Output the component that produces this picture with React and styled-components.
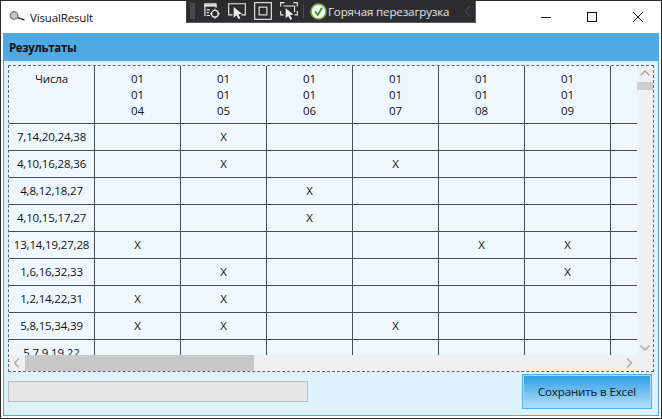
import React from "react";
import styled, { createGlobalStyle } from "styled-components";

const UI_FONT = `"Open Sans", "Noto Sans", "Liberation Sans", sans-serif`;

const GlobalStyle = createGlobalStyle`
    html, body {
        margin: 0;
        padding: 0;
        background: #ffffff;
    }
    * {
        box-sizing: border-box;
    }
`;

const Frame = styled.div`
    position: relative;
    display: flex;
    flex-direction: column;
    width: 662px;
    height: 419px;
    overflow: hidden;
    padding-bottom: 2px;
    background: #ffffff;
    border: 1px solid #2b2b2b;
    font-family: ${UI_FONT};
    font-size: 11.5px;
    color: #111111;
`;

const TitleBar = styled.div`
    display: flex;
    flex: 0 0 32px;
    align-items: center;
`;
const AppIcon = styled.svg`
    width: 16px;
    height: 12px;
    margin-left: 8px;
`;
const AppTitle = styled.span`
    flex: 1;
    margin-left: 5px;
    font-size: 11.5px;
    letter-spacing: -0.15px;
`;
const WindowButton = styled.div`
    display: flex;
    align-items: center;
    justify-content: center;
    width: 46px;
    height: 32px;
    svg {
        width: 10px;
        height: 10px;
    }
`;

const DebugToolbar = styled.div`
    position: absolute;
    top: -1px;
    left: 185px;
    display: flex;
    align-items: center;
    width: 290px;
    height: 23px;
    background: #2d2d30;
    border-right: 1px solid #5a5a5e;
    border-bottom: 1px solid #5a5a5e;
    border-left: 1px solid #3e3e42;
    color: #e6e6e6;
`;
const Gripper = styled.div`
    width: 5px;
    height: 16px;
    margin: 0 6px 0 3px;
    background-image: radial-gradient(#6a6a6a 0.6px, transparent 0.8px);
    background-size: 2px 2px;
`;
const ToolIcon = styled.svg`
    flex: none;
    width: 20px;
    height: 20px;
    margin-right: 6px;
`;
const ToolDivider = styled.div`
    width: 1px;
    height: 14px;
    margin: 0 6px 0 -2px;
    background: #4a4a4e;
`;
const HotReloadIcon = styled.svg`
    flex: none;
    width: 17px;
    height: 17px;
`;
const HotReloadLabel = styled.span`
    margin-left: 1px;
    font-size: 11.5px;
    letter-spacing: -0.12px;
    white-space: nowrap;
    color: #e4e4e4;
`;
const ToolChevron = styled.svg`
    flex: none;
    width: 7px;
    height: 11px;
    margin-left: 15px;
`;

const Panel = styled.div`
    display: flex;
    flex: 1;
    flex-direction: column;
    min-height: 0;
    margin: 0 2px;
    background: #def2fc;
    border: 1px solid #4fa9e2;
    border-top: 0;
`;
const PanelHeader = styled.div`
    display: flex;
    flex: 0 0 28px;
    align-items: center;
    margin: 0 -1px;
    padding-left: 6px;
    background: #50a9e3;
    font-size: 11.5px;
    font-weight: 700;
    letter-spacing: -0.35px;
`;
const PanelBody = styled.div`
    display: flex;
    flex: 1;
    flex-direction: column;
    min-height: 0;
    padding: 4px 4px 0;
`;

const GridView = styled.div`
    display: grid;
    flex: 0 0 307px;
    grid-template-columns: 628px 16px;
    grid-template-rows: 289px 16px;
    background: #eff8ff;
    border: 1px dashed #666a70;
`;
const Viewport = styled.div`
    overflow: hidden;
`;
const Row = styled.div`
    display: flex;
    width: 702px;
    height: ${props => (props.$header ? 58 : 27)}px;
    border-bottom: 1px solid #474d55;
`;
const Cell = styled.div`
    display: flex;
    flex: 0 0 86px;
    align-items: ${props => (props.$top ? "flex-start" : "center")};
    justify-content: center;
    padding-top: ${props => (props.$top ? 5 : 0)}px;
    border-right: 1px solid #474d55;
    font-size: 11.5px;
    line-height: 16px;
    letter-spacing: -0.15px;
    text-align: center;
    color: #111111;
`;
const HeaderDate = styled.div`
    white-space: pre-line;
`;

const ScrollTrack = styled.div`
    display: flex;
    flex-direction: ${props => (props.$vertical ? "column" : "row")};
    align-items: center;
    background: #f0f0f0;
`;
const ScrollArrow = styled.svg`
    flex: none;
    width: 16px;
    height: 16px;
`;
const VerticalThumb = styled.div`
    flex: none;
    width: 16px;
    height: 8px;
    background: #cdcdcd;
`;
const HorizontalThumb = styled.div`
    flex: none;
    width: 229px;
    height: 16px;
    background: #c8c8c8;
`;
const ScrollSpacer = styled.div`
    flex: 1;
`;
const ScrollCorner = styled.div`
    background: #f0f0f0;
`;

const Footer = styled.div`
    display: flex;
    flex: 1;
    align-items: flex-start;
    justify-content: space-between;
    padding-right: 2px;
`;
const ProgressBar = styled.div`
    width: 300px;
    height: 21px;
    margin-top: 9px;
    background: #e6e6e6;
    border: 1px solid #bcbcbc;
`;
const SaveButton = styled.button`
    width: 130px;
    height: 35px;
    margin: 2px 0 0;
    padding: 0;
    background: linear-gradient(to bottom, #2b9de8, #b4defa);
    border: 1px solid #52ade8;
    box-shadow: inset 0 0 0 1px #a9d9f7;
    font-family: ${UI_FONT};
    font-size: 11.5px;
    letter-spacing: -0.12px;
    color: #111111;
`;

const dates = ["04", "05", "06", "07", "08", "09"];

const rows = [
    { numbers: "7,14,20,24,38", marks: ["05"] },
    { numbers: "4,10,16,28,36", marks: ["05", "07"] },
    { numbers: "4,8,12,18,27", marks: ["06"] },
    { numbers: "4,10,15,17,27", marks: ["06"] },
    { numbers: "13,14,19,27,28", marks: ["04", "08", "09"] },
    { numbers: "1,6,16,32,33", marks: ["05", "09"] },
    { numbers: "1,2,14,22,31", marks: ["04", "05"] },
    { numbers: "5,8,15,34,39", marks: ["04", "05", "07"] },
    { numbers: "5,7,9,19,22", marks: [] },
];

const arrows = {
    up: "M3.5 9.5 L8 5 L12.5 9.5",
    down: "M3.5 6.5 L8 11 L12.5 6.5",
    left: "M10 3.5 L5.5 8 L10 12.5",
    right: "M6 3.5 L10.5 8 L6 12.5",
};

const Arrow = ({ dir }) => (
    <ScrollArrow viewBox="0 0 16 16">
        <path d={arrows[dir]} fill="none" stroke="#b0b0b0" strokeWidth="1.6" />
    </ScrollArrow>
);

const App = () => (
    <Frame>
        <GlobalStyle />
        <TitleBar>
            <AppIcon viewBox="0 0 16 12">
                <circle cx="5" cy="4.5" r="3.8" fill="#c3c7cb" stroke="#6f7479" strokeWidth="1.2" />
                <path d="M8.5 6.5 L15.5 9" stroke="#44484c" strokeWidth="1.5" />
            </AppIcon>
            <AppTitle>VisualResult</AppTitle>
            <WindowButton>
                <svg viewBox="0 0 10 10">
                    <path d="M0 5.5 H10" stroke="#111" strokeWidth="1" />
                </svg>
            </WindowButton>
            <WindowButton>
                <svg viewBox="0 0 10 10">
                    <rect x="0.5" y="0.5" width="9" height="9" fill="none" stroke="#111" strokeWidth="1" />
                </svg>
            </WindowButton>
            <WindowButton>
                <svg viewBox="0 0 10 10">
                    <path d="M0 0 L10 10 M10 0 L0 10" stroke="#111" strokeWidth="1" />
                </svg>
            </WindowButton>
        </TitleBar>

        <DebugToolbar>
            <Gripper />
            <ToolIcon viewBox="0 0 18 18">
                <path d="M3.5 13.5 V2.5 H13.5 V6" fill="none" stroke="#eee" strokeWidth="1" />
                <path d="M3 3 H14 V5 H3 Z" fill="#eee" />
                <path d="M5 8 H8 M5 10.5 H7 M5 13 H8" stroke="#eee" strokeWidth="1" />
                <circle cx="12.5" cy="11.5" r="3" fill="none" stroke="#eee" strokeWidth="1.2" />
                <path d="M12.5 7 V9 M12.5 14 V16 M8 11.5 H10 M15 11.5 H17" stroke="#eee" strokeWidth="1" />
            </ToolIcon>
            <ToolIcon viewBox="0 0 18 18">
                <path d="M5 12.5 H1.5 V2.5 H16.5 V12.5 H13" fill="none" stroke="#eee" strokeWidth="1" />
                <path d="M6 5.5 L6 15 L8.5 12.8 L10.5 16.5 L12 15.5 L10.2 12 L13.5 11.5 Z" fill="#eee" />
            </ToolIcon>
            <ToolIcon viewBox="0 0 18 18">
                <rect x="1.5" y="1.5" width="15" height="15" fill="none" stroke="#eee" strokeWidth="1" />
                <rect x="5.5" y="5.5" width="7" height="7" fill="none" stroke="#eee" strokeWidth="1" />
            </ToolIcon>
            <ToolIcon viewBox="0 0 18 18">
                <path d="M1.5 5 V1.5 H5 M13 1.5 H16.5 V5 M1.5 9 V12.5 H4 M16.5 9 V12.5 H14" fill="none" stroke="#eee" strokeWidth="1" />
                <path d="M4 4.5 H14 V10" fill="none" stroke="#eee" strokeWidth="1" />
                <path d="M6 6.5 L6 15.5 L8.3 13.4 L10.2 17 L11.7 16 L10 12.6 L13 12.2 Z" fill="#eee" />
            </ToolIcon>
            <ToolDivider />
            <HotReloadIcon viewBox="0 0 17 17">
                <circle cx="8.5" cy="8.5" r="7.5" fill="#f2f7ee" stroke="#6fae4a" strokeWidth="1.6" />
                <path d="M5 8.5 L7.8 12 L12 4.8" fill="none" stroke="#3c8a2a" strokeWidth="1.7" />
            </HotReloadIcon>
            <HotReloadLabel>Горячая перезагрузка</HotReloadLabel>
            <ToolChevron viewBox="0 0 7 11">
                <path d="M6 0.5 L1 5.5 L6 10.5" fill="none" stroke="#5c5c60" strokeWidth="1" />
            </ToolChevron>
        </DebugToolbar>

        <Panel>
            <PanelHeader>Результаты</PanelHeader>
            <PanelBody>
                <GridView>
                    <Viewport>
                        <Row $header>
                            <Cell $top>Числа</Cell>
                            {dates.map(d => (
                                <Cell $top key={d}>
                                    <HeaderDate>{`01\n01\n${d}`}</HeaderDate>
                                </Cell>
                            ))}
                            <Cell $top />
                        </Row>
                        {rows.map(row => (
                            <Row key={row.numbers}>
                                <Cell>{row.numbers}</Cell>
                                {dates.map(d => (
                                    <Cell key={d}>{row.marks.includes(d) ? "X" : ""}</Cell>
                                ))}
                                <Cell />
                            </Row>
                        ))}
                    </Viewport>
                    <ScrollTrack $vertical>
                        <Arrow dir="up" />
                        <VerticalThumb />
                        <ScrollSpacer />
                        <Arrow dir="down" />
                    </ScrollTrack>
                    <ScrollTrack>
                        <Arrow dir="left" />
                        <HorizontalThumb />
                        <ScrollSpacer />
                        <Arrow dir="right" />
                    </ScrollTrack>
                    <ScrollCorner />
                </GridView>
                <Footer>
                    <ProgressBar />
                    <SaveButton>Сохранить в Excel</SaveButton>
                </Footer>
            </PanelBody>
        </Panel>
    </Frame>
);

export default App;
